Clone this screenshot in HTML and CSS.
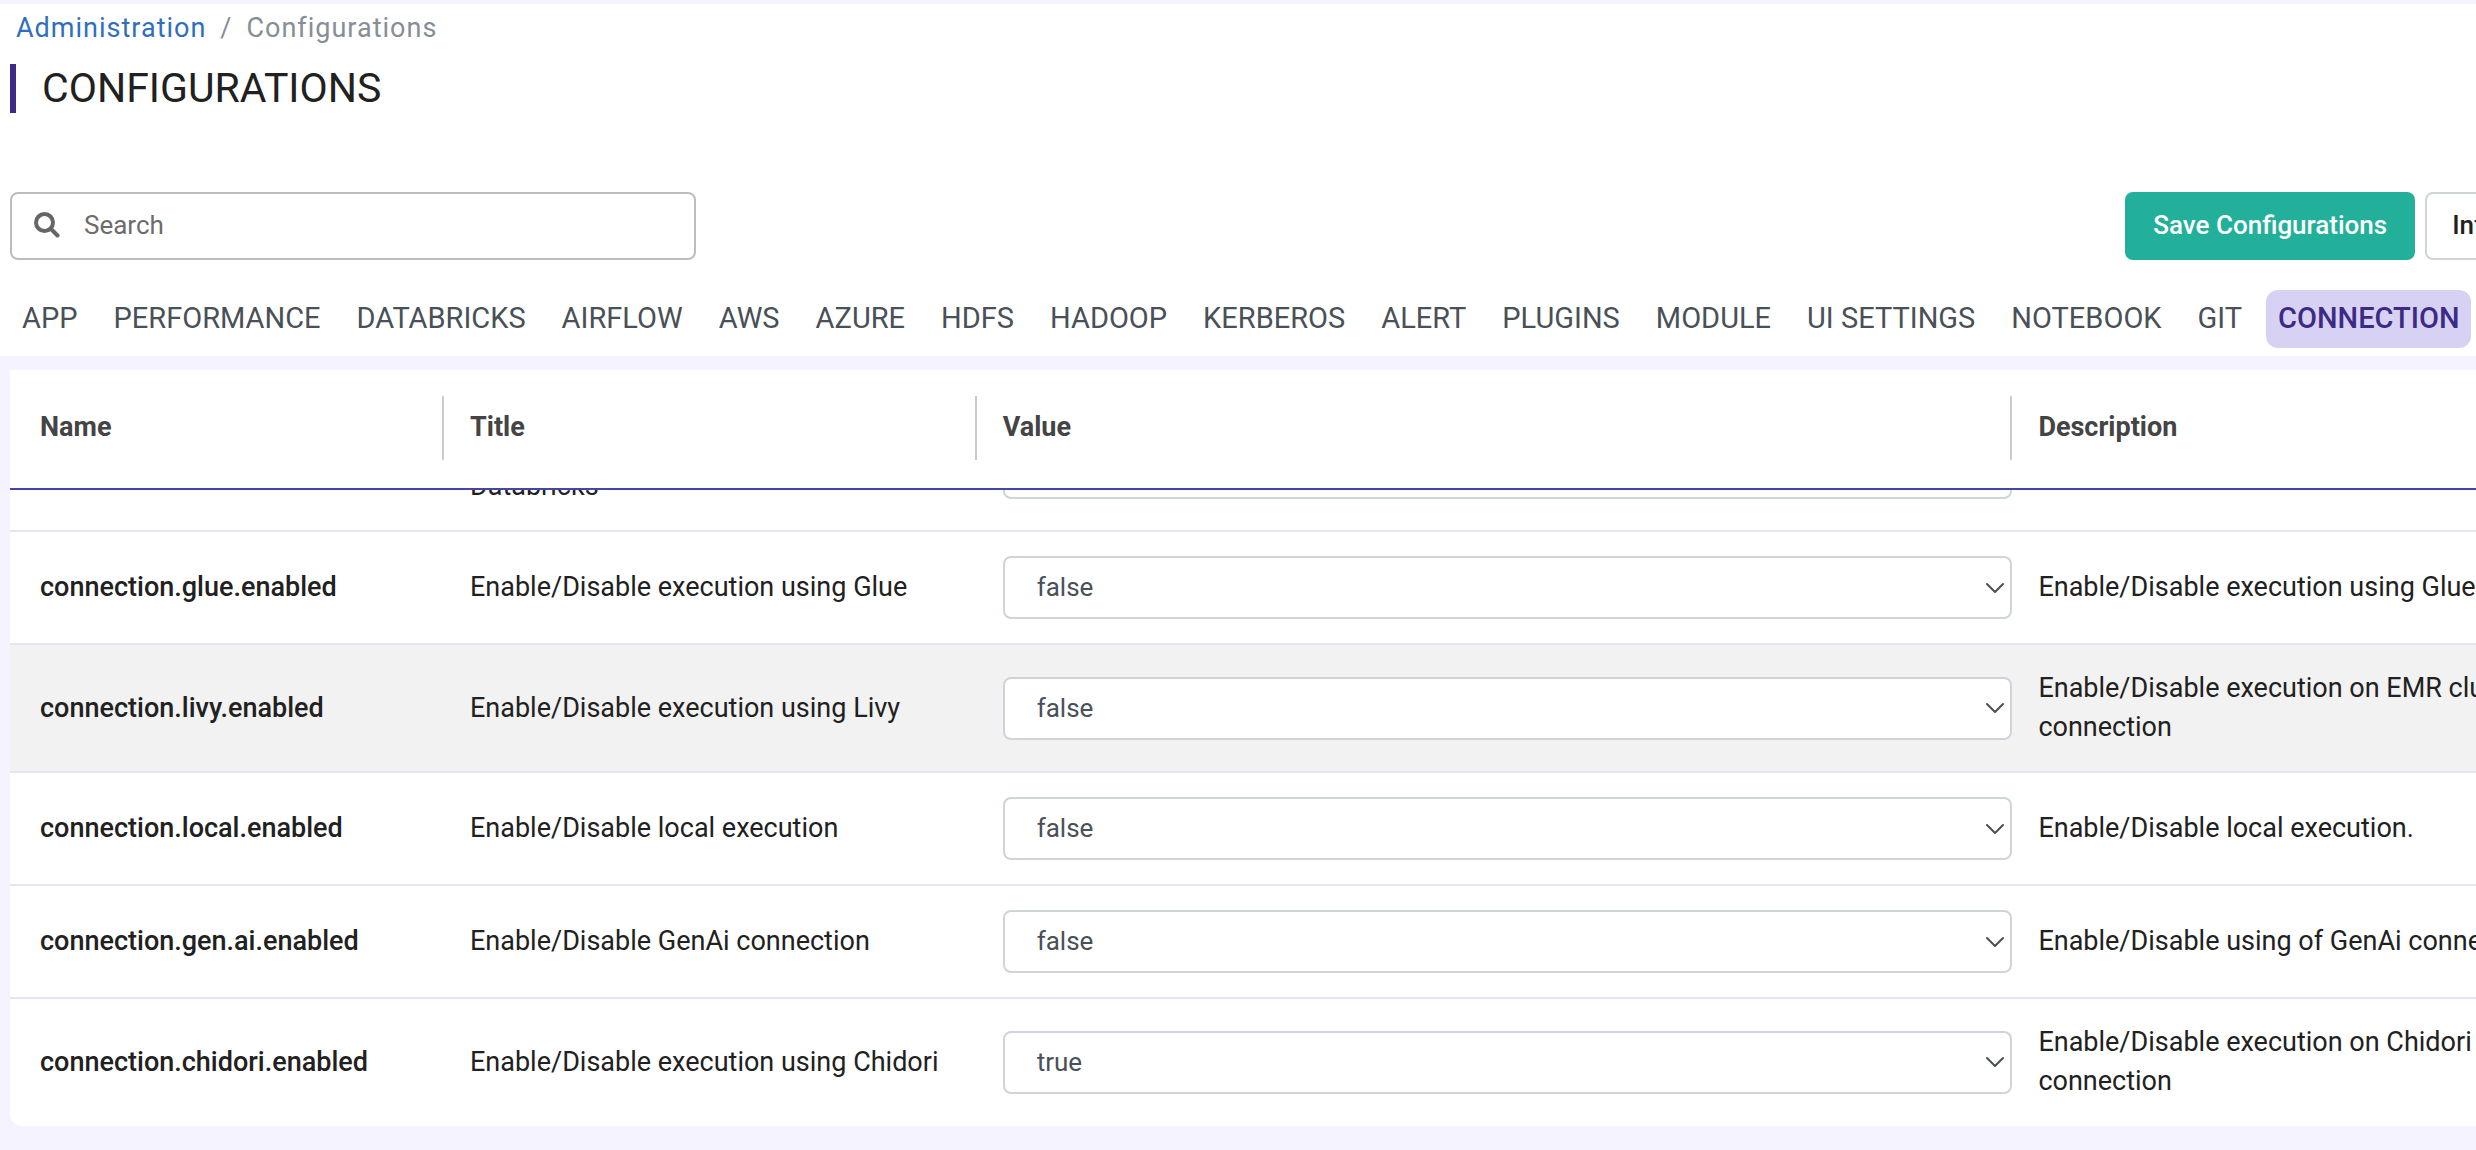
FILE: index.html
```html
<!DOCTYPE html>
<html lang="en">
<head>
<meta charset="utf-8">
<meta name="viewport" content="width=device-width, initial-scale=1">
<title>Configurations</title>
<link rel="stylesheet" href="styles.css">
</head>
<body>
<header class="page-head">
  <nav class="breadcrumb" aria-label="Breadcrumb">
    <a href="#">Administration</a>
    <span class="breadcrumb-slash">/</span>
    <span>Configurations</span>
  </nav>
  <h1 class="page-title">CONFIGURATIONS</h1>
  <div class="toolbar">
    <label class="search">
      <svg class="search-icon" viewBox="0 0 26 26" aria-hidden="true"><circle cx="10.5" cy="10.5" r="8.5"/><path d="M17 17l6.5 6.5"/></svg>
      <input type="search" placeholder="Search" aria-label="Search">
    </label>
    <div class="actions">
      <button type="button" class="btn btn-primary">Save Configurations</button>
      <button type="button" class="btn btn-outline">Info</button>
    </div>
  </div>
  <nav class="tabs" aria-label="Sections">
    <a href="#">APP</a>
    <a href="#">PERFORMANCE</a>
    <a href="#">DATABRICKS</a>
    <a href="#">AIRFLOW</a>
    <a href="#">AWS</a>
    <a href="#">AZURE</a>
    <a href="#">HDFS</a>
    <a href="#">HADOOP</a>
    <a href="#">KERBEROS</a>
    <a href="#">ALERT</a>
    <a href="#">PLUGINS</a>
    <a href="#">MODULE</a>
    <a href="#">UI SETTINGS</a>
    <a href="#">NOTEBOOK</a>
    <a href="#">GIT</a>
    <a href="#" class="active" aria-current="page">CONNECTION</a>
  </nav>
</header>
<main class="table-scroll" id="config-scroll">
  <table class="config-table">
    <colgroup><col class="col-name"><col class="col-title"><col class="col-value"><col></colgroup>
    <thead>
      <tr>
        <th scope="col"><div>Name</div></th>
        <th scope="col"><div>Title</div></th>
        <th scope="col"><div>Value</div></th>
        <th scope="col"><div>Description</div></th>
      </tr>
    </thead>
    <tbody>
      <tr>
        <th scope="row">connection.databricks.enabled</th>
        <td>Enable/Disable execution using Databricks</td>
        <td class="value"><select aria-label="connection.databricks.enabled"><option>true</option><option selected>false</option></select></td>
        <td class="desc">Enable/Disable execution using Databricks</td>
      </tr>
      <tr>
        <th scope="row">connection.glue.enabled</th>
        <td>Enable/Disable execution using Glue</td>
        <td class="value"><select aria-label="connection.glue.enabled"><option>true</option><option selected>false</option></select></td>
        <td class="desc">Enable/Disable execution using Glue</td>
      </tr>
      <tr class="hovered">
        <th scope="row">connection.livy.enabled</th>
        <td>Enable/Disable execution using Livy</td>
        <td class="value"><select aria-label="connection.livy.enabled"><option>true</option><option selected>false</option></select></td>
        <td class="desc">Enable/Disable execution on EMR cluster<br>connection</td>
      </tr>
      <tr>
        <th scope="row">connection.local.enabled</th>
        <td>Enable/Disable local execution</td>
        <td class="value"><select aria-label="connection.local.enabled"><option>true</option><option selected>false</option></select></td>
        <td class="desc">Enable/Disable local execution.</td>
      </tr>
      <tr>
        <th scope="row">connection.gen.ai.enabled</th>
        <td>Enable/Disable GenAi connection</td>
        <td class="value"><select aria-label="connection.gen.ai.enabled"><option>true</option><option selected>false</option></select></td>
        <td class="desc">Enable/Disable using of GenAi connection</td>
      </tr>
      <tr>
        <th scope="row">connection.chidori.enabled</th>
        <td>Enable/Disable execution using Chidori</td>
        <td class="value"><select aria-label="connection.chidori.enabled"><option selected>true</option><option>false</option></select></td>
        <td class="desc">Enable/Disable execution on Chidori<br>connection</td>
      </tr>
    </tbody>
  </table>
</main>
<script src="script.js"></script>
</body>
</html>
```
FILE: styles.css
```css
* { box-sizing: border-box; }

body {
  margin: 0;
  padding-top: 4px;
  height: 100vh;
  display: flex;
  flex-direction: column;
  overflow: hidden;
  background: #f5f3ff;
  color: #212121;
  font-family: Roboto, "Liberation Sans", sans-serif;
  font-size: 26px;
  line-height: 39px;
}

a { text-decoration: none; }

.page-head {
  flex: none;
  padding: 5px 0 8px 10px;
  background: #fff;
}

.breadcrumb {
  display: flex;
  gap: 14px;
  padding-left: 6px;
  font-size: 27px;
  letter-spacing: 1px;
  color: #868e96;
}
.breadcrumb a { color: #2f6fc1; }

.page-title {
  margin: 16px 0 79px;
  padding-left: 26px;
  border-left: 6px solid #3c2a86;
  font-size: 41px;
  font-weight: 400;
  line-height: 49px;
}

.toolbar {
  display: flex;
  justify-content: space-between;
}

.search {
  display: flex;
  align-items: center;
  width: 686px;
  max-width: 50%;
  height: 68px;
  padding: 0 22px 2px;
  gap: 24px;
  border: 2px solid #bdbdbd;
  border-radius: 8px;
}
.search-icon {
  flex: none;
  width: 26px;
  height: 26px;
  fill: none;
  stroke: #666;
  stroke-width: 4;
  stroke-linecap: round;
}
.search input {
  flex: 1;
  min-width: 0;
  padding: 0;
  border: 0;
  outline: 0;
  background: none;
  font: inherit;
}
.search input::placeholder { color: #6c6c6c; opacity: 1; }

.actions {
  display: flex;
  gap: 10px;
  margin-right: -46px;
}
.btn {
  height: 68px;
  padding: 0 25px 2px;
  border: 2px solid transparent;
  border-radius: 8px;
  font: inherit;
  font-weight: 500;
}
.actions .btn-primary { padding-inline: 26px; }
.actions .btn-outline { padding-right: 22px; }
.btn-primary { background: #22b09b; color: #fff; }
.btn-outline { background: #fff; border-color: #ced4da; color: #212121; }

.tabs {
  display: flex;
  gap: 12px;
  margin-top: 30px;
}
.tabs a {
  padding: 7px 12px 9px;
  border-radius: 12px;
  font-size: 29px;
  line-height: 42px;
  color: #495057;
  white-space: nowrap;
}
.tabs .active {
  background: #d7d2f4;
  color: #3c2a86;
  font-weight: 500;
}

.table-scroll {
  margin: 14px 0 24px 10px;
  min-height: 0;
  overflow: hidden;
  border-radius: 0 0 0 12px;
  background: #fff;
}

.config-table {
  width: 100%;
  table-layout: fixed;
  border-collapse: separate;
  border-spacing: 0;
  font-size: 27px;
}
.col-name { width: 17.6%; }
.col-title { width: 21.6%; }
.col-value { width: 42%; }

.config-table th,
.config-table td {
  padding: 24px 26px;
  border-bottom: 2px solid #e4e5f7;
  text-align: left;
  vertical-align: middle;
  font-weight: 400;
}
.config-table th:first-child { padding-left: 30px; }
.config-table tbody th { font-weight: 500; white-space: nowrap; }
.config-table tbody tr:last-child > * {
  padding-bottom: 25px;
  border-bottom: 0;
}

.config-table thead th {
  position: sticky;
  top: 0;
  z-index: 1;
  padding: 26px 0 28px 26px;
  border-bottom-color: #4545a5;
  background: #fff;
  color: #444;
  font-weight: 700;
}
.config-table thead div {
  padding: 12px 0 13px;
  border-right: 2px solid #ccc;
}
.config-table thead th:last-child div { border-right: 0; }

.hovered { background: #f2f2f2; }
.config-table .value { padding-right: 0; }
.config-table .desc { padding-right: 0; white-space: nowrap; }

select {
  display: block;
  width: 100%;
  height: 63px;
  padding: 0 32px;
  appearance: none;
  border: 2px solid #ced4da;
  border-radius: 8px;
  background: #fff url("data:image/svg+xml,%3Csvg xmlns='http://www.w3.org/2000/svg' width='20' height='12' fill='none' stroke='%23495057' stroke-width='2' stroke-linecap='round' stroke-linejoin='round'%3E%3Cpath d='M2 2l8 8 8-8'/%3E%3C/svg%3E") no-repeat right 5px center;
  color: #495057;
  font: inherit;
  font-size: 26px;
}
```
FILE: script.js
```js
// Open the list at its last entries.
const list = document.getElementById('config-scroll');
list.scrollTop = list.scrollHeight;
```
